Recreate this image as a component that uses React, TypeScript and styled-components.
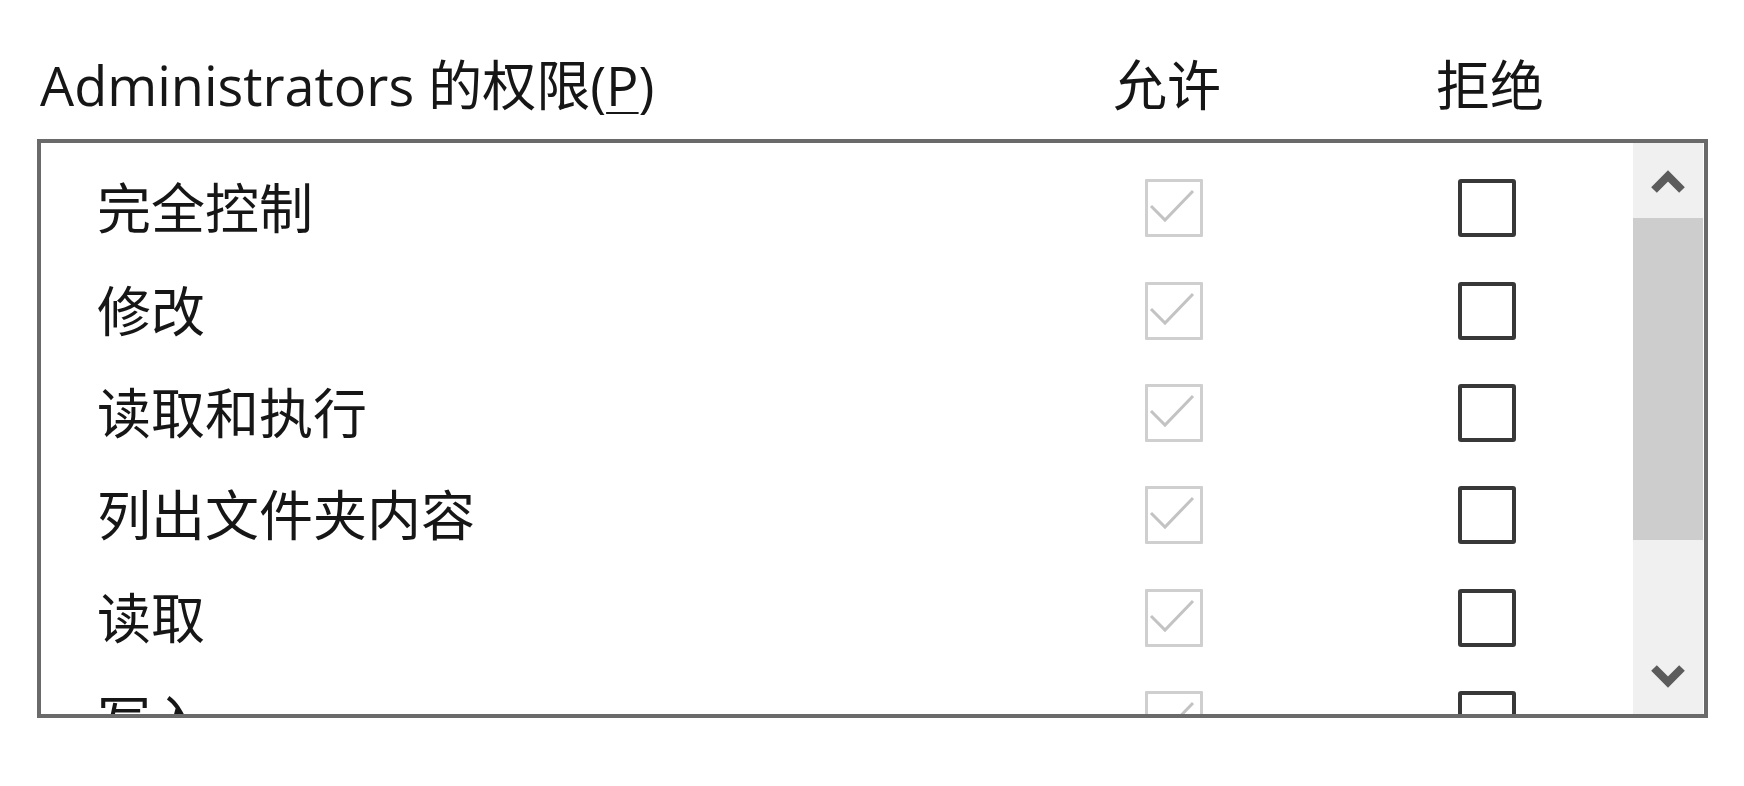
import React from 'react';
import styled, { createGlobalStyle } from 'styled-components';

const GlobalStyle = createGlobalStyle`
  html, body {
    margin: 0;
    padding: 0;
    background: #ffffff;
  }
  body {
    font-family: 'Open Sans', 'Noto Sans CJK SC', sans-serif;
    font-weight: 400;
    color: #161616;
  }
`;

type Permission = {
  name: string;
  allow: boolean;
  deny: boolean;
};

const permissions: Permission[] = [
  { name: '完全控制', allow: true, deny: false },
  { name: '修改', allow: true, deny: false },
  { name: '读取和执行', allow: true, deny: false },
  { name: '列出文件夹内容', allow: true, deny: false },
  { name: '读取', allow: true, deny: false },
  { name: '写入', allow: true, deny: false },
];

const ArrowIcon = ({ up }: { up?: boolean }) => (
  <svg width='38' height='30' viewBox='0 0 38 30'>
    <polyline
      points={up ? '5,24 19,10 33,24' : '5,6 19,20 33,6'}
      fill='none'
      stroke='#5c5c5c'
      strokeWidth='8'
      strokeLinejoin='miter'
    />
  </svg>
);

const CheckMark = () => (
  <svg width='52' height='52' viewBox='0 0 52 52'>
    <polyline
      points='3,24 17,38 45,9'
      fill='none'
      stroke='#c3c3c3'
      strokeWidth='3'
    />
  </svg>
);

export default function App() {
  return (
    <Page>
      <GlobalStyle />
      <Panel>
        <HeaderRow>
          <Caption>
            Administrators 的权限(<AccessKey>P</AccessKey>)
          </Caption>
          <ColumnTitle>允许</ColumnTitle>
          <ColumnTitle>拒绝</ColumnTitle>
        </HeaderRow>
        <ListBox>
          <Rows>
            {permissions.map((p) => (
              <Row key={p.name}>
                <Label>{p.name}</Label>
                <Cell>
                  <CheckBox disabled>{p.allow && <CheckMark />}</CheckBox>
                </Cell>
                <Cell>
                  <CheckBox>{p.deny && <CheckMark />}</CheckBox>
                </Cell>
              </Row>
            ))}
          </Rows>
          <ScrollBar>
            <ArrowButton>
              <ArrowIcon up />
            </ArrowButton>
            <Thumb />
            <Track />
            <ArrowButton>
              <ArrowIcon />
            </ArrowButton>
          </ScrollBar>
        </ListBox>
      </Panel>
    </Page>
  );
}

const Page = styled.div`
  width: 1744px;
  height: 786px;
  overflow: hidden;
  background: #ffffff;
`;

const Panel = styled.div`
  width: 1671px;
  margin-left: 37px;
  padding-top: 50px;
`;

const HeaderRow = styled.div`
  display: grid;
  grid-template-columns: 1fr 200px 200px;
  column-gap: 123px;
  height: 70px;
  align-items: center;
  padding: 0 118px 0 3px;
  margin-bottom: 19px;
`;

const Caption = styled.div`
  font-size: 54px;
  line-height: 70px;
  white-space: nowrap;
`;

const AccessKey = styled.span`
  text-decoration: underline;
  text-decoration-thickness: 2px;
  text-underline-offset: 6px;
`;

const ColumnTitle = styled.div`
  font-size: 54px;
  line-height: 70px;
  text-align: center;
`;

const ListBox = styled.div`
  display: flex;
  height: 571px;
  border: 4px solid #6a6a6a;
  background: #ffffff;
  overflow: hidden;
`;

const Rows = styled.div`
  flex: 1;
  padding-top: 14px;
`;

const Row = styled.div`
  display: grid;
  grid-template-columns: 1fr 200px 200px;
  column-gap: 113px;
  align-items: center;
  height: 102.4px;
  padding: 0 46px 0 56px;
`;

const Label = styled.div`
  font-size: 54px;
  line-height: 70px;
  white-space: nowrap;
`;

const Cell = styled.div`
  display: flex;
  justify-content: center;
  align-items: center;
`;

const CheckBox = styled.div<{ disabled?: boolean }>`
  box-sizing: border-box;
  width: 58px;
  height: 58px;
  display: flex;
  align-items: center;
  justify-content: center;
  border: ${(p) => (p.disabled ? '3px solid #cfcfcf' : '4px solid #383838')};
  border-radius: ${(p) => (p.disabled ? '1px' : '3px')};
  background: #ffffff;
`;

const ScrollBar = styled.div`
  width: 70px;
  margin-right: 1px;
  display: flex;
  flex-direction: column;
  background: #f0f0f0;
`;

const ArrowButton = styled.div`
  height: 75px;
  display: flex;
  align-items: center;
  justify-content: center;
`;

const Thumb = styled.div`
  height: 322px;
  background: #cdcdcd;
`;

const Track = styled.div`
  flex: 1;
`;
